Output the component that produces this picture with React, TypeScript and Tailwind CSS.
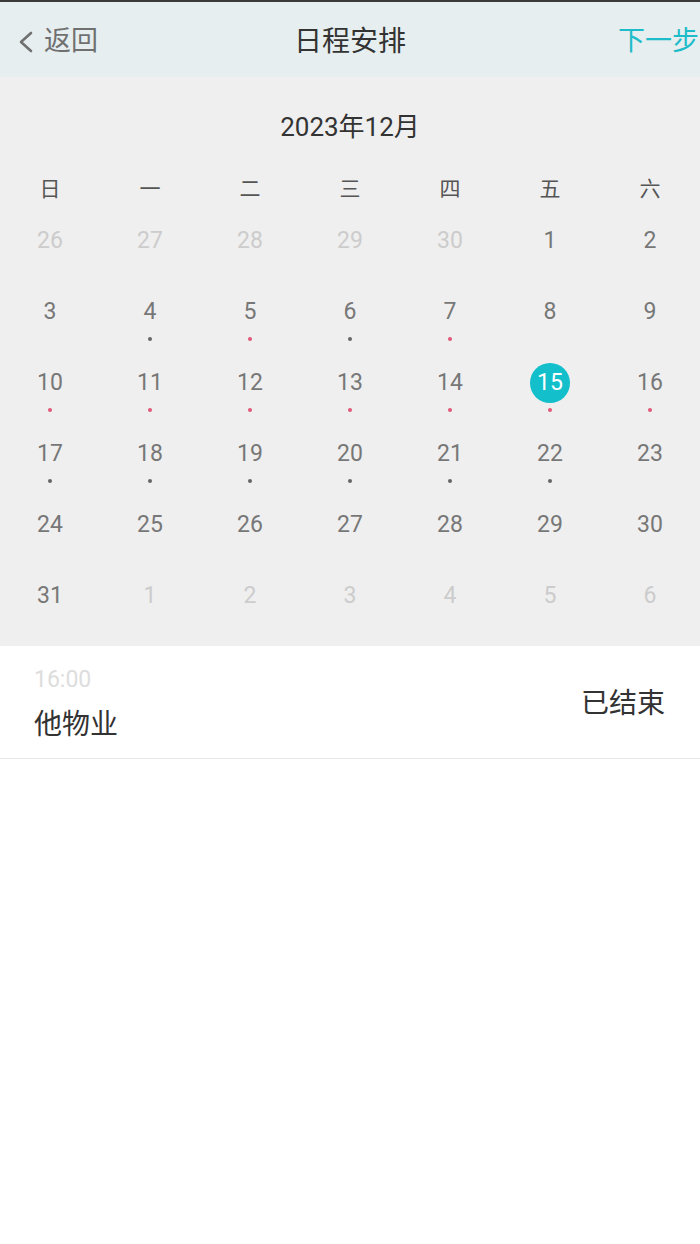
import React from 'react';

type Day = { n: number; cur: boolean; dot?: 'gray' | 'pink' };

const WEEK = ['日', '一', '二', '三', '四', '五', '六'];

const PINK = [5, 7, 10, 11, 12, 13, 14, 15, 16];
const GRAY = [4, 6, 17, 18, 19, 20, 21, 22];

function buildDays(): Day[] {
  const days: Day[] = [];
  for (let n = 26; n <= 30; n++) days.push({ n, cur: false });
  for (let n = 1; n <= 31; n++) {
    days.push({
      n,
      cur: true,
      dot: PINK.includes(n) ? 'pink' : GRAY.includes(n) ? 'gray' : undefined,
    });
  }
  for (let n = 1; n <= 6; n++) days.push({ n, cur: false });
  return days;
}

const font = { fontFamily: 'Roboto, "Noto Sans CJK SC", sans-serif' };

export default function App() {
  const days = buildDays();
  const selected = 15;

  return (
    <div className="min-h-[1244px] w-[700px] bg-white" style={font}>
      {/* status strip */}
      <div className="h-[2px] bg-[#3a3a3a]" />

      {/* header */}
      <div className="relative flex h-[75px] items-center bg-[#e6eef0] pt-[4px]">
        <div className="flex items-center pl-[16px] text-[27px] text-[#707070]">
          <svg width="20" height="24" viewBox="0 0 20 24" className="mr-[8px]">
            <path d="M15 3 L5 12 L15 21" fill="none" stroke="#707070" strokeWidth="2.6" strokeLinecap="round" strokeLinejoin="round" />
          </svg>
          <span>返回</span>
        </div>
        <div className="absolute left-1/2 -translate-x-1/2 text-[28px] text-[#333]">日程安排</div>
        <div className="ml-auto whitespace-nowrap pr-[1px] text-[27px] text-[#1ebcc8]">下一步</div>
      </div>

      {/* calendar */}
      <div className="bg-[#efefef] pt-[34px] pb-[10px]">
        <div className="h-8 text-center text-[26px] leading-8 text-[#333]">2023年12月</div>
        <div className="mt-[27px] grid h-[40px] grid-cols-7 items-center text-center text-[21px] text-[#555]">
          {WEEK.map((w) => (
            <div key={w}>{w}</div>
          ))}
        </div>
        <div className="grid grid-cols-7">
          {days.map((d, i) => {
            const isSel = d.cur && d.n === selected;
            return (
              <div key={i} className="flex h-[71px] flex-col items-center pt-[17px]">
                <div className="flex h-[28px] items-center justify-center">
                  {isSel ? (
                    <span className="flex h-[40px] w-[40px] items-center justify-center rounded-full bg-[#12bfcb] text-[23px] text-white">
                      {d.n}
                    </span>
                  ) : (
                    <span className={`text-[23px] ${d.cur ? 'text-[#777]' : 'text-[#cccccc]'}`}>{d.n}</span>
                  )}
                </div>
                <div className="mt-[11px] flex h-[4px] items-center justify-center">
                  {d.dot && (
                    <span
                      className={`h-[4px] w-[4px] rounded-full ${d.dot === 'pink' ? 'bg-[#e2577a]' : 'bg-[#666]'}`}
                    />
                  )}
                </div>
              </div>
            );
          })}
        </div>
      </div>

      {/* event */}
      <div className="flex h-[113px] items-center border-b border-[#e8e8e8] pl-[34px] pr-[35px] pt-[4px]">
        <div className="flex flex-col">
          <span className="text-[23px] leading-[30px] text-[#dddddd]">16:00</span>
          <span className="mt-[12px] text-[28px] leading-[36px] text-[#333]">他物业</span>
        </div>
        <span className="ml-auto text-[28px] text-[#333]">已结束</span>
      </div>
    </div>
  );
}
